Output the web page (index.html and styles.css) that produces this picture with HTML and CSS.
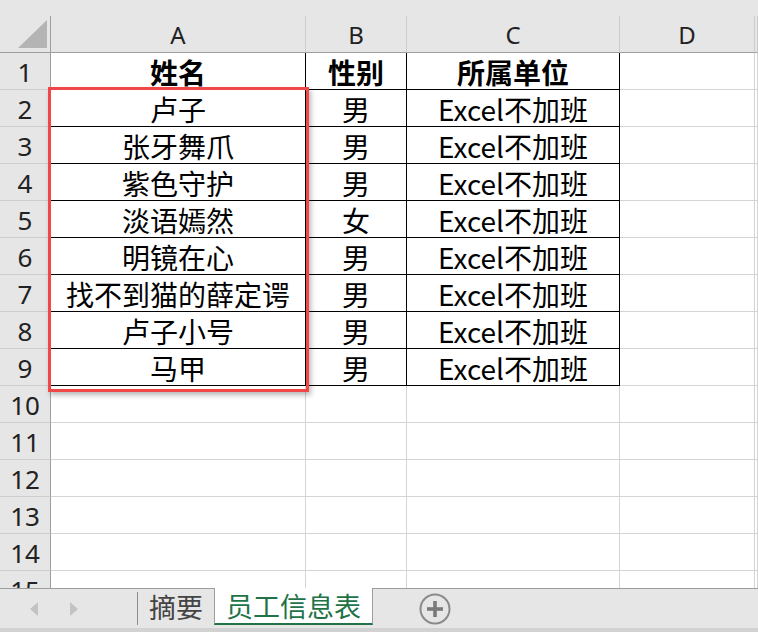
FILE: index.html
```html
<!DOCTYPE html>
<html lang="zh-CN">
<head>
<meta charset="utf-8">
<title>员工信息表</title>
<link rel="stylesheet" href="styles.css">
</head>
<body>
<div class="app">
  <div class="sheet">
    <div class="topband"></div>
    <div class="grid">
      <div class="corner"><svg width="51" height="36" viewBox="0 0 51 36"><polygon points="47,4 47,32 18,32" fill="#b4b4b4"/></svg></div>
      <div class="colhead">A</div>
      <div class="colhead">B</div>
      <div class="colhead">C</div>
      <div class="colhead">D</div>
      <div class="colhead last"></div>

      <div class="rowhead">1</div>
      <div class="cell b bold">姓名</div><div class="cell b bold">性别</div><div class="cell b bold">所属单位</div><div class="cell"></div><div class="cell last"></div>

      <div class="rowhead">2</div>
      <div class="cell b">卢子</div><div class="cell b">男</div><div class="cell b">Excel不加班</div><div class="cell"></div><div class="cell last"></div>

      <div class="rowhead">3</div>
      <div class="cell b">张牙舞爪</div><div class="cell b">男</div><div class="cell b">Excel不加班</div><div class="cell"></div><div class="cell last"></div>

      <div class="rowhead">4</div>
      <div class="cell b">紫色守护</div><div class="cell b">男</div><div class="cell b">Excel不加班</div><div class="cell"></div><div class="cell last"></div>

      <div class="rowhead">5</div>
      <div class="cell b">淡语嫣然</div><div class="cell b">女</div><div class="cell b">Excel不加班</div><div class="cell"></div><div class="cell last"></div>

      <div class="rowhead">6</div>
      <div class="cell b">明镜在心</div><div class="cell b">男</div><div class="cell b">Excel不加班</div><div class="cell"></div><div class="cell last"></div>

      <div class="rowhead">7</div>
      <div class="cell b">找不到猫的薛定谔</div><div class="cell b">男</div><div class="cell b">Excel不加班</div><div class="cell"></div><div class="cell last"></div>

      <div class="rowhead">8</div>
      <div class="cell b">卢子小号</div><div class="cell b">男</div><div class="cell b">Excel不加班</div><div class="cell"></div><div class="cell last"></div>

      <div class="rowhead">9</div>
      <div class="cell b">马甲</div><div class="cell b">男</div><div class="cell b">Excel不加班</div><div class="cell"></div><div class="cell last"></div>

      <div class="rowhead">10</div>
      <div class="cell"></div><div class="cell"></div><div class="cell"></div><div class="cell"></div><div class="cell last"></div>
      <div class="rowhead">11</div>
      <div class="cell"></div><div class="cell"></div><div class="cell"></div><div class="cell"></div><div class="cell last"></div>
      <div class="rowhead">12</div>
      <div class="cell"></div><div class="cell"></div><div class="cell"></div><div class="cell"></div><div class="cell last"></div>
      <div class="rowhead">13</div>
      <div class="cell"></div><div class="cell"></div><div class="cell"></div><div class="cell"></div><div class="cell last"></div>
      <div class="rowhead">14</div>
      <div class="cell"></div><div class="cell"></div><div class="cell"></div><div class="cell"></div><div class="cell last"></div>
      <div class="rowhead">15</div>
      <div class="cell"></div><div class="cell"></div><div class="cell"></div><div class="cell"></div><div class="cell last"></div>
    </div>
    <div class="selection"></div>
  </div>
  <div class="tabbar">
    <div class="nav">
      <span class="arrow left"></span>
      <span class="arrow right"></span>
    </div>
    <div class="tab">摘要</div>
    <div class="tab active">员工信息表</div>
    <div class="add"><svg width="32" height="32" viewBox="0 0 32 32"><circle cx="16" cy="16" r="14.5" fill="none" stroke="#8a8a8a" stroke-width="2"/><rect x="8" y="14.2" width="16" height="3.6" fill="#7a7a7a"/><rect x="14.2" y="8" width="3.6" height="16" fill="#7a7a7a"/></svg></div>
  </div>
</div>
</body>
</html>
```
FILE: styles.css
```css
html, body {
  margin: 0;
  padding: 0;
  background: #ffffff;
}
.app {
  width: 758px;
  height: 632px;
  overflow: hidden;
  font-family: "Noto Sans CJK SC", "Noto Sans", sans-serif;
  color: #000;
}
.sheet {
  position: relative;
  height: 588px;
  overflow: hidden;
}
.topband {
  height: 16px;
  background: #e6e6e6;
}
.grid {
  display: grid;
  grid-template-columns: 51px 255px 101px 213px 135px 1fr;
  grid-template-rows: 37px;
  grid-auto-rows: 37px;
}
.grid > div {
  box-sizing: border-box;
}
.corner {
  background: #e6e6e6;
  border-right: 1px solid #9e9e9e;
  border-bottom: 1px solid #9e9e9e;
}
.corner svg {
  display: block;
}
.colhead {
  background: #e6e6e6;
  border-right: 1px solid #cdcdcd;
  border-bottom: 1px solid #9e9e9e;
  font-family: "Noto Sans", "Noto Sans CJK SC", sans-serif;
  font-size: 24px;
  color: #222;
  text-align: center;
  padding-top: 1px;
  line-height: 35px;
}
.rowhead {
  background: #e6e6e6;
  border-right: 1px solid #9e9e9e;
  border-bottom: 1px solid #cdcdcd;
  font-family: "Noto Sans", "Noto Sans CJK SC", sans-serif;
  font-size: 26px;
  color: #222;
  text-align: center;
  padding-top: 3px;
  line-height: 33px;
}
.cell {
  border-right: 1px solid #d4d4d4;
  border-bottom: 1px solid #d4d4d4;
  font-size: 28px;
  text-align: center;
  padding-top: 3px;
  line-height: 33px;
  white-space: nowrap;
}
.cell.b {
  border-right-color: #000;
  border-bottom-color: #000;
}
.bold {
  font-weight: bold;
}
.selection {
  position: absolute;
  left: 48px;
  top: 87px;
  width: 261px;
  height: 305px;
  box-sizing: border-box;
  border: 3px solid #f04848;
  box-shadow: 2px 3px 5px rgba(0, 0, 0, 0.28);
}
.tabbar {
  height: 44px;
  box-sizing: border-box;
  background: #e6e6e6;
  border-top: 1px solid #9e9e9e;
  border-bottom: 4px solid #d2d2d2;
  display: flex;
  align-items: flex-start;
}
.nav {
  width: 138px;
  height: 33px;
  margin-top: 3px;
  box-sizing: border-box;
  border-right: 1px solid #8c8c8c;
  display: flex;
  align-items: center;
  gap: 32px;
  padding-left: 30px;
}
.arrow {
  width: 0;
  height: 0;
  border-top: 7px solid transparent;
  border-bottom: 7px solid transparent;
}
.arrow.left {
  border-right: 8px solid #c3c3c3;
}
.arrow.right {
  border-left: 8px solid #c3c3c3;
}
.tab {
  font-size: 27px;
  color: #444;
  width: 76px;
  height: 37px;
  line-height: 35px;
  box-sizing: border-box;
  text-align: center;
}
.tab.active {
  margin-top: -1px;
  height: 37px;
  width: 159px;
  background: #fff;
  color: #217346;
  border-left: 1px solid #9e9e9e;
  border-right: 1px solid #9e9e9e;
  border-bottom: 2px solid #217346;
}
.add {
  margin-left: 46px;
  margin-top: 4px;
  width: 32px;
  height: 32px;
}
.add svg {
  display: block;
}
```
